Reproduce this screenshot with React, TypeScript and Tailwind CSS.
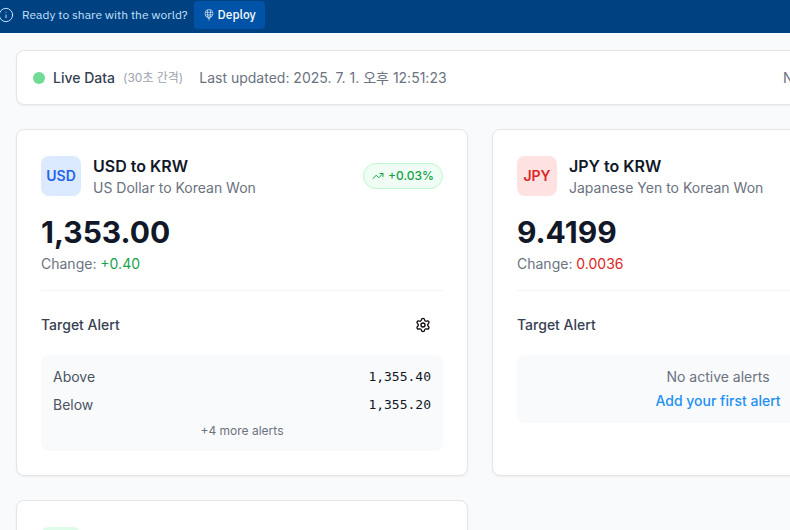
import type { ReactNode } from "react";
import { Info, Settings, TrendingUp } from "lucide-react";

function GlobePin() {
  return (
    <svg viewBox="0 0 10 12" className="h-3 w-[10px]" fill="none" stroke="currentColor" strokeWidth="0.6" aria-hidden="true">
      <circle cx="5" cy="4.5" r="4" />
      <path d="M1.2 3.4h7.6M1.2 5.8h7.6M3.6 0.8v7M6.4 0.8v7" />
      <path d="M5 6v5.6M2.6 7.6 5 9.8l2.4-2.2" />
    </svg>
  );
}

function DeployBar() {
  return (
    <header className="flex h-[33px] items-start bg-[#004182] font-['IBM_Plex_Sans','Noto_Sans',sans-serif] text-xs">
      <div className="-ml-0.5 flex h-[30px] items-center text-[#c2e1ff]">
        <Info size={16} strokeWidth={1.5} />
        <p className="ml-2">Ready to share with the world?</p>
      </div>
      <button
        type="button"
        className="mt-px ml-1.5 flex h-7 w-[71px] items-center gap-1 rounded bg-[#0053a6] pl-2.5 font-medium text-[#f5f9fc]"
      >
        <GlobePin />
        Deploy
      </button>
    </header>
  );
}

function StatusBar() {
  return (
    <section className="flex items-center justify-between rounded-lg border border-[#e5e5e5] bg-white px-4 py-4 text-sm leading-[21px] shadow-xs">
      <div className="flex items-center gap-4">
        <div className="flex items-center gap-2">
          <span className="size-3 rounded-full bg-[#6fdb95]" />
          <span className="font-medium text-[#374151]">Live Data</span>
          <span className="text-xs text-[#9ca3af]">(30초 간격)</span>
        </div>
        <span className="text-[#6b7280]">Last updated: 2025. 7. 1. 오후 12:51:23</span>
      </div>
      <span className="w-36 text-[#6b7280]">N</span>
    </section>
  );
}

type CardProps = {
  code: string;
  logoClass: string;
  title: string;
  name: string;
  price: string;
  change: string;
  changeClass: string;
  badge?: string;
  children: ReactNode;
};

function RateCard({ code, logoClass, title, name, price, change, changeClass, badge, children }: CardProps) {
  return (
    <article className="rounded-lg border border-[#e5e5e5] bg-white p-6 shadow-xs">
      <div className="flex items-center justify-between">
        <div className="flex items-center gap-3">
          <div className={`flex size-10 items-center justify-center rounded-lg text-sm font-semibold ${logoClass}`}>{code}</div>
          <div>
            <h3 className="text-base font-semibold text-[#111827]">{title}</h3>
            <p className="text-sm text-[#6b7280]">{name}</p>
          </div>
        </div>
        {badge && (
          <span className="flex items-center gap-1 rounded-full border border-[#bbf7d0] bg-[#f0fdf4] px-2 py-1 text-xs font-medium text-[#16a34a]">
            <TrendingUp size={12} />
            {badge}
          </span>
        )}
      </div>
      <p className="mt-4 text-3xl font-bold text-[#111827]">{price}</p>
      <p className="mt-1 text-sm text-[#6b7280]">
        Change: <span className={changeClass}>{change}</span>
      </p>
      <div className="mt-4 border-t border-[#f3f4f6] pt-4">
        <div className="mb-3 flex h-9 items-center justify-between">
          <h4 className="text-sm font-medium text-[#374151]">Target Alert</h4>
          <button type="button" aria-label="Alert settings" className="flex h-9 w-10 items-center justify-center text-[#0c0a09]">
            <Settings size={16} />
          </button>
        </div>
        {children}
      </div>
    </article>
  );
}

function AlertRow({ label, value }: { label: string; value: string }) {
  return (
    <div className="flex items-center justify-between">
      <dt className="text-[#4b5563]">{label}</dt>
      <dd className="font-['DejaVu_Sans_Mono',monospace] text-[13px] text-[#111827]">{value}</dd>
    </div>
  );
}

export default function App() {
  return (
    <div className="h-screen overflow-hidden bg-[#f9fafb] font-['Inter','Noto_Sans_CJK_KR',sans-serif]">
      <DeployBar />
      <main className="min-w-[960px] px-4 pt-[17px]">
        <StatusBar />
        <div className="mt-6 grid grid-cols-2 gap-6">
          <RateCard
            code="USD"
            logoClass="bg-[#dbeafe] text-[#2563eb]"
            title="USD to KRW"
            name="US Dollar to Korean Won"
            price="1,353.00"
            change="+0.40"
            changeClass="text-[#16a34a]"
            badge="+0.03%"
          >
            <div className="rounded-lg bg-[#f9fafb] p-3">
              <dl className="space-y-2 text-sm">
                <AlertRow label="Above" value="1,355.40" />
                <AlertRow label="Below" value="1,355.20" />
              </dl>
              <p className="mt-2 text-center text-xs text-[#6b7280]">+4 more alerts</p>
            </div>
          </RateCard>
          <RateCard
            code="JPY"
            logoClass="bg-[#fee2e2] text-[#dc2626]"
            title="JPY to KRW"
            name="Japanese Yen to Korean Won"
            price="9.4199"
            change="0.0036"
            changeClass="text-[#dc2626]"
          >
            <div className="rounded-lg bg-[#f9fafb] p-3 text-center text-sm">
              <p className="text-[#6b7280]">No active alerts</p>
              <button type="button" className="mt-1 font-medium text-[#2390f4]">
                Add your first alert
              </button>
            </div>
          </RateCard>
          <article className="rounded-lg border border-[#e5e5e5] bg-white p-6 shadow-xs">
            <div className="flex h-11 items-center">
              <div className="size-10 rounded-lg bg-[#dcfce7]" />
            </div>
          </article>
        </div>
      </main>
    </div>
  );
}
